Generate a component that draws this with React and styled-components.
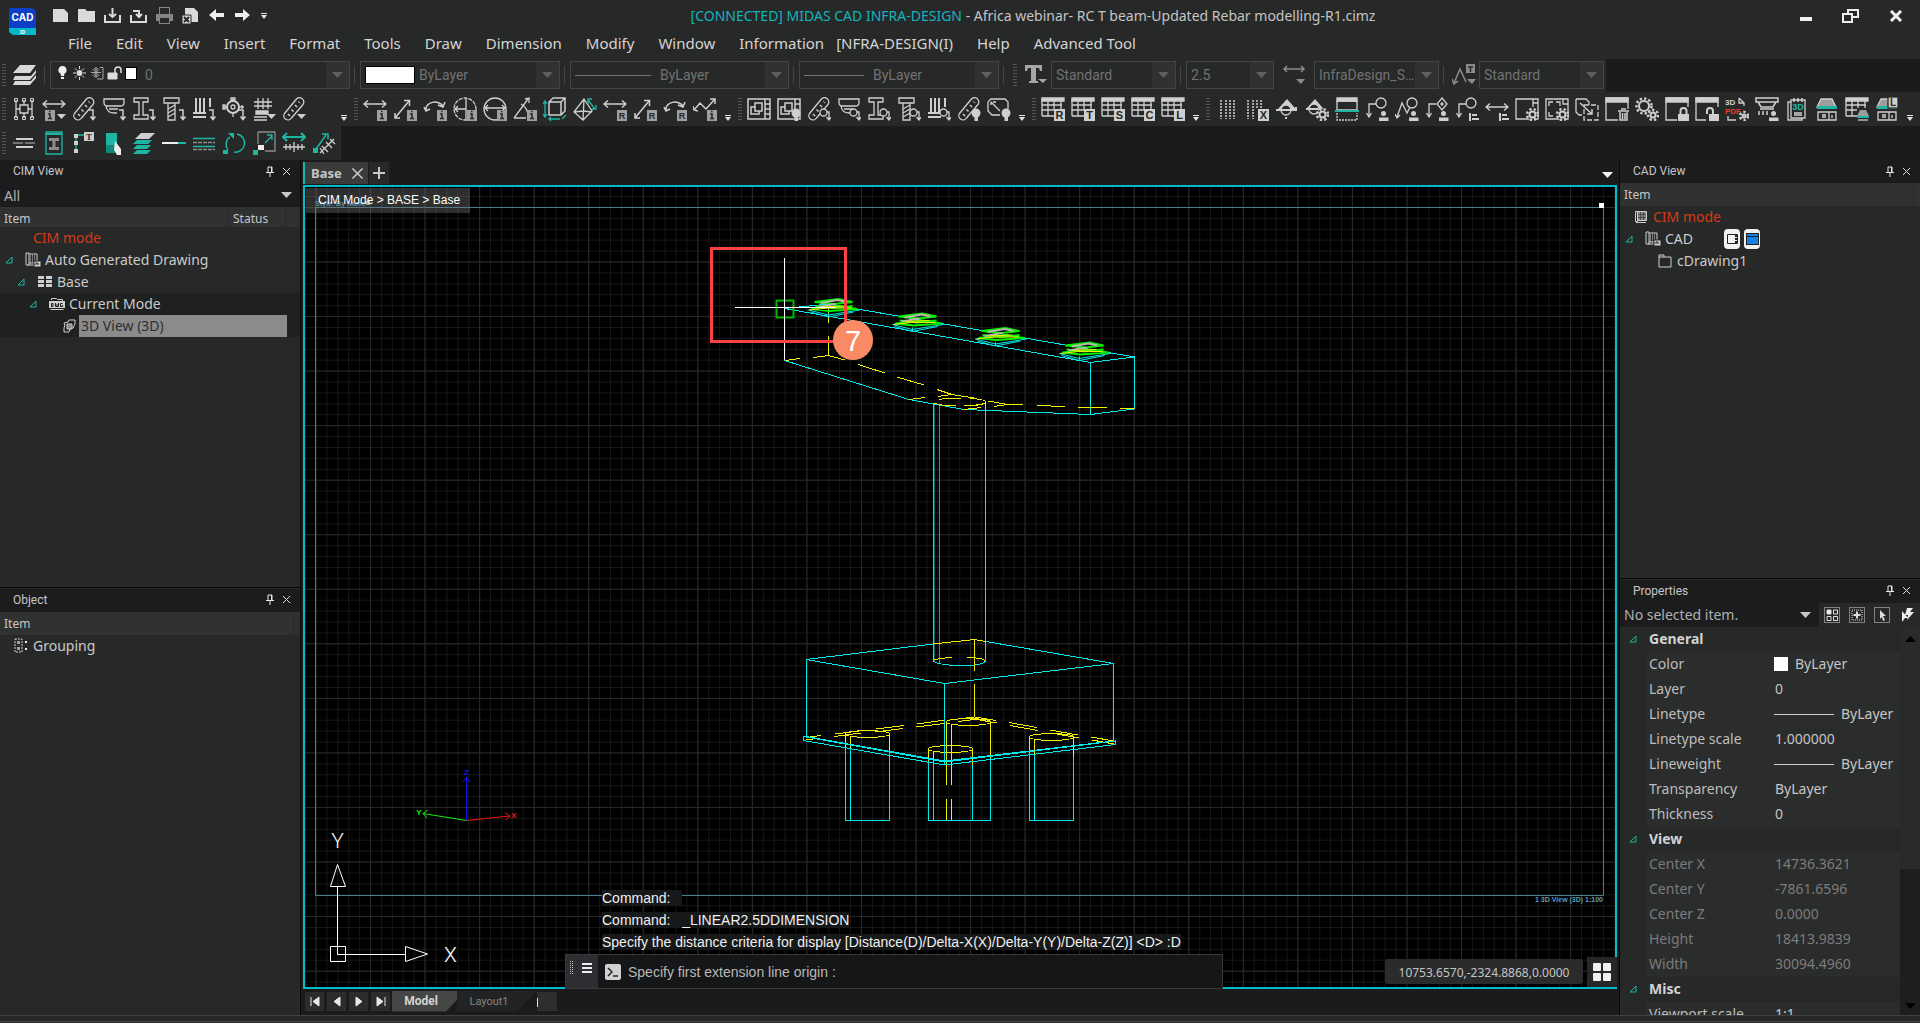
import { useState } from "react";
import styled, { createGlobalStyle } from "styled-components";

const GlobalStyle = createGlobalStyle`
  * {
    box-sizing: border-box;
  }

  body {
    margin: 0;
    background: #1b1b1b;
    color: #c6c6c6;
    font-family: "Noto Sans", "Open Sans", sans-serif;
    font-size: 14px;
    overflow: hidden;
  }

  button, select, input {
    font: inherit;
    color: inherit;
    background: none;
    border: 0;
    padding: 0;
    margin: 0;
    outline: none;
  }

  svg {
    display: block;
    flex: none;
  }
`;

const Page = styled.div`
  display: flex;
  flex-direction: column;
  height: 100vh;
`;

const Header = styled.header`
  display: flex;
  height: 59px;
  background: #272828;
`;

const LogoSlot = styled.div`
  width: 47px;
  padding: 8px 0 0 9px;
`;

const HeaderRows = styled.div`
  flex: 1;
  min-width: 0;
`;

const TitleRow = styled.div`
  display: flex;
  align-items: center;
  height: 31px;
`;

const QuickButton = styled.button`
  display: flex;
  align-items: center;
  justify-content: center;
  width: ${props => props.$narrow ? 18 : 26}px;
  height: 30px;
`;

const Title = styled.h1`
  flex: 1;
  margin: 0 0 0 10px;
  text-align: center;
  font-size: 14px;
  font-weight: 400;
  line-height: 30px;
  color: #c4c4c4;
  white-space: nowrap;
`;

const Product = styled.span`
  color: #14b4be;
`;

const WindowButtons = styled.div`
  display: flex;
  padding-right: 2px;
`;

const WindowButton = styled.button`
  display: flex;
  align-items: center;
  justify-content: center;
  width: 45px;
  height: 28px;
`;

const MenuBar = styled.nav`
  display: flex;
  gap: 24px;
  padding-left: 21px;
  height: 24px;
`;

const MenuItem = styled.button`
  margin-left: ${props => props.$tight ? -12 : 0}px;
  font-size: 15px;
  line-height: 24px;
  white-space: nowrap;
  color: #d4d4d4;
`;

const Toolbar = styled.div`
  display: flex;
  align-items: center;
  align-self: flex-start;
  height: ${props => props.$height || 34}px;
  width: ${props => props.$fill ? "100%" : "auto"};
  padding: 0 ${props => props.$fill ? 0 : 2}px 1px 0;
  background: #272828;
`;

const Gripper = styled.div`
  width: 4px;
  height: 24px;
  margin: 0 ${props => props.$after || 2}px 0 ${props => props.$before || 2}px;
  background-image: radial-gradient(circle, #565656 1px, transparent 1px);
  background-size: 2px 3px;
`;

const Separator = styled.div`
  width: 1px;
  height: 18px;
  margin: 0 5px 0 4px;
  background: #454545;
`;

const ToolButton = styled.button`
  display: flex;
  align-items: center;
  justify-content: center;
  width: 30px;
  height: 30px;
`;

const Overflow = styled.button`
  display: flex;
  align-items: flex-end;
  justify-content: flex-end;
  width: ${props => props.$wide ? 43 : 16}px;
  height: 24px;
  padding: 0 5px 0 0;
`;

const WideIcon = styled.div`
  display: flex;
  justify-content: center;
  width: ${props => props.$width}px;
`;

const ComboFrame = styled.div`
  display: flex;
  align-items: center;
  width: ${props => props.$width}px;
  height: 28px;
  border: 1px solid #434444;
  color: #727272;
  font-family: Roboto, sans-serif;
  font-size: 14px;
`;

const ComboSelect = styled.select`
  appearance: none;
  flex: 1;
  min-width: 0;
  height: 26px;
  padding-left: 4px;
  text-overflow: ellipsis;
`;

const ComboArrow = styled.span`
  display: flex;
  align-items: center;
  justify-content: center;
  width: 23px;
  height: 26px;
  background: #303133;
`;

const LayerState = styled.span`
  display: flex;
  align-items: center;
  gap: 3px;
  padding: 0 4px 4px 5px;
`;

const ColorBlock = styled.span`
  width: ${props => props.$width}px;
  height: ${props => props.$height}px;
  border: 1px solid #000;
  background: #fff;
`;

const BlockSlot = styled.span`
  display: flex;
  padding-left: 4px;
`;

const LineSample = styled.span`
  width: ${props => props.$width}px;
  height: 1px;
  margin: 0 5px 0 4px;
  background: #757575;
`;

const Body = styled.main`
  display: flex;
  flex: 1;
  min-height: 0;
  background: #1b1b1c;
`;

const Side = styled.aside`
  display: flex;
  flex-direction: column;
  width: 301px;
  border: solid #080808;
  border-width: ${props => props.$right ? "0 0 0 1px" : "0 1px 0 0"};
`;

const Panel = styled.section`
  display: flex;
  flex-direction: column;
  flex: ${props => props.$grow || 1} 1 0;
  min-height: 0;
  background: #272828;

  & + & {
    padding-top: 1px;
    border-top: 1px solid #080808;
  }
`;

const PanelHeader = styled.div`
  display: flex;
  align-items: center;
  flex: none;
  height: 23px;
  padding: 0 6px 1px 13px;
  background: #1c1c1d;
`;

const PanelTitle = styled.h2`
  flex: 1;
  margin: 0;
  font-family: Roboto, sans-serif;
  font-size: 12px;
  font-weight: 400;
  line-height: 20px;
`;

const PanelButton = styled.button`
  display: flex;
  align-items: center;
  justify-content: center;
  width: 16px;
  height: 20px;
`;

const Filter = styled.div`
  display: flex;
  align-items: center;
  flex: 1;
  height: 24px;
  padding: 0 8px 0 4px;
  background: #1c1c1e;
`;

const FilterRow = styled.div`
  display: flex;
  align-items: center;
  flex: none;
  height: 24px;
`;

const FilterSelect = styled.select`
  appearance: none;
  flex: 1;
  height: 24px;
  font-size: 14px;
  color: #b0b0b0;
`;

const ColumnHeads = styled.div`
  display: flex;
  flex: none;
  height: ${props => props.$tall ? 23 : 20}px;
  background: #303131;
  font-size: 12px;
  line-height: 23px;
`;

const ColumnHead = styled.div`
  width: ${props => props.$width ? `${props.$width}px` : "auto"};
  flex: ${props => props.$width ? "none" : 1};
  padding-left: 4px;
  border-right: 1px solid #272828;
`;

const ColumnTail = styled.div`
  width: ${props => props.$width}px;
`;

const Tree = styled.ul`
  margin: 0;
  padding: 0;
  list-style: none;
`;

const TreeRow = styled.li`
  display: flex;
  align-items: center;
  height: 22px;
  padding-left: ${props => props.$level * 12 + 3}px;
  padding-right: 13px;
  color: ${props => props.$alert ? "#d63a17" : "#cacaca"};
  background: ${props => props.$dark ? "#1f2020" : "transparent"};
`;

const Twist = styled.span`
  display: flex;
  justify-content: center;
  width: ${props => props.$slim ? 10 : 12}px;
`;

const TreeIcon = styled.span`
  display: flex;
  align-items: center;
  justify-content: center;
  width: 16px;
  margin-left: ${props => props.$slim ? 0 : 10}px;
`;

const TreeLabel = styled.span`
  flex: ${props => props.$selected ? 1 : "none"};
  margin-left: 2px;
  padding-left: 2px;
  line-height: 22px;
  color: ${props => props.$selected ? "#2e2e2e" : "inherit"};
  background: ${props => props.$selected ? "#8b8b8b" : "none"};
`;

const Chips = styled.span`
  display: flex;
  gap: 4px;
  margin-left: 31px;
`;

const Chip = styled.button`
  display: flex;
  align-items: center;
  justify-content: center;
  width: 16px;
  height: 20px;
  border-radius: 4px;
  background: #f2f2f2;
`;

const Center = styled.section`
  display: flex;
  flex-direction: column;
  flex: 1;
  min-width: 0;
  padding: 0 2px;
`;

const DocTabs = styled.div`
  display: flex;
  align-items: flex-end;
  height: 25px;
  padding-bottom: 1px;
`;

const DocTab = styled.button`
  display: flex;
  align-items: center;
  gap: 9px;
  width: 65px;
  height: 22px;
  padding-left: 6px;
  border-left: 2px solid #10b8b0;
  background: #3a3b3b;
  font-size: 13px;
  font-weight: 700;
`;

const AddTab = styled.button`
  display: flex;
  align-items: center;
  justify-content: center;
  width: 20px;
  height: 22px;
  margin-left: 1px;
  background: #29292a;
`;

const TabListButton = styled.button`
  margin: 0 4px 6px auto;
`;

const Viewport = styled.div`
  position: relative;
  flex: 1;
  min-height: 0;
  border: 2px solid #00bccb;
  background: #000;
`;

const Scene = styled.svg`
  width: 100%;
  height: 100%;
`;

const Crumb = styled.div`
  position: absolute;
  top: 1px;
  left: 1px;
  width: 164px;
  padding-left: 12px;
  font-family: "Liberation Sans", sans-serif;
  font-size: 12px;
  line-height: 25px;
  white-space: nowrap;
  color: #fff;
  background: rgba(110, 110, 110, 0.42);
`;

const Console = styled.div`
  position: absolute;
  left: 260px;
  bottom: -2px;
  width: 658px;
  font-family: "Liberation Sans", sans-serif;
  font-size: 14px;
`;

const LogLine = styled.div`
  height: 22px;
  padding: 2px 0 0 37px;
  white-space: pre;
  color: #f0f0f0;

  span {
    background: #16181a;
  }
`;

const CommandBar = styled.div`
  display: flex;
  height: 35px;
  border: 1px solid #37383a;
  background: #151617;
`;

const CommandHandle = styled.button`
  display: flex;
  align-items: center;
  gap: 9px;
  width: 32px;
  padding: 0 4px 7px;
  background: #2d2e31;
`;

const CommandInput = styled.input`
  flex: 1;
  padding: 0 7px;
  color: #b9b9b9;
`;

const CommandIcon = styled.span`
  display: flex;
  align-items: center;
  padding-left: 7px;
`;

const Readout = styled.output`
  position: absolute;
  right: 32px;
  bottom: 3px;
  width: 198px;
  height: 25px;
  border-radius: 3px;
  text-align: center;
  font-size: 12px;
  line-height: 27px;
  color: #c4c4c4;
  background: #2a2b2c;
`;

const TileButton = styled.button`
  position: absolute;
  right: -2px;
  bottom: 0;
  display: flex;
  align-items: center;
  justify-content: center;
  width: 30px;
  height: 30px;
  background: #262728;
`;

const LayoutTabs = styled.div`
  display: flex;
  align-items: center;
  height: 26px;
  padding: 0 0 2px 2px;
  font-family: Roboto, sans-serif;
`;

const NavButton = styled.button`
  display: flex;
  align-items: center;
  justify-content: center;
  width: 19px;
  height: 19px;
  margin-right: 3px;
  background: #2b2c2e;
`;

const LayoutTab = styled.button`
  width: ${props => props.$active ? 74 : 80}px;
  height: 21px;
  margin-left: ${props => props.$active ? -1 : -9}px;
  padding: 0 ${props => props.$active ? 16 : 20}px 0 ${props => props.$active ? 0 : 4}px;
  font-size: ${props => props.$active ? 12 : 11}px;
  font-weight: ${props => props.$active ? 700 : 400};
  color: ${props => props.$active ? "#d4d4d4" : "#858585"};
  background: ${props => props.$active ? "#454646" : "#222324"};
  clip-path: polygon(0 0, 100% 0, calc(100% - 20px) 100%, 0 100%);
`;

const TabSplitter = styled.div`
  width: 20px;
  height: 19px;
  background: linear-gradient(#ddd, #ddd) 0 6px / 1px 9px no-repeat #2e2e31;
`;

const StatusStrip = styled.footer`
  height: 8px;
  border-top: 1px solid #3f4040;
  background: linear-gradient(#4a4b4b, #4a4b4b) 0 5px / 100% 1px no-repeat #262727;
`;

const PickButton = styled.button`
  display: flex;
  align-items: center;
  justify-content: center;
  width: 25px;
  height: 24px;
`;

const PickButtons = styled.div`
  display: flex;
  width: 101px;
`;

const PropertyArea = styled.div`
  display: flex;
  flex: 1;
  min-height: 0;
  overflow: hidden;
`;

const PropertyScroll = styled.div`
  flex: 1;
  min-width: 0;
  overflow: hidden;
`;

const PropertyTable = styled.table`
  width: 100%;
  table-layout: fixed;
  border-collapse: collapse;
  font-size: 14px;

  td, th {
    height: 25px;
    padding: 0;
    text-align: left;
    font-weight: 400;
    line-height: 24px;
    white-space: nowrap;
  }
`;

const TwistCell = styled.td`
  && {
    padding-left: 7px;
  }
`;

const SectionName = styled.th`
  && {
    padding-left: 3px;
    font-weight: 700;
    color: #d2d2d2;
  }
`;

const NameCell = styled.th`
  && {
    padding-left: 3px;
    color: ${props => props.$dim ? "#7c7c7c" : "#bebebe"};
    background: #2b2c2c;
  }
`;

const ValueCell = styled.td`
  color: ${props => props.$dim ? "#7c7c7c" : "#c6c6c6"};
  background: #2b2c2c;
`;

const ValueLine = styled.span`
  display: flex;
  align-items: center;
  gap: 7px;
  padding-left: ${props => props.$sample ? 2 : 3}px;
`;

const Swatch = styled.span`
  width: ${props => props.$line ? 60 : 14}px;
  height: ${props => props.$line ? 1 : 14}px;
  background: ${props => props.$line ? "#d0d0d0" : "#fff"};
`;

const Scrollbar = styled.div`
  display: flex;
  flex-direction: column;
  align-items: center;
  justify-content: space-between;
  width: 20px;
  padding: 9px 0 6px;
  background: linear-gradient(#292a2a, #292a2a) 0 0 / 100% 242px no-repeat #1d1e1e;
`;

/* ---------- icons ---------- */

const G = "#cfcfcf";
const TEAL = "#1fb5a4";
const BG = "#272828";

const Tag = ({ children, x = 13 }) => (
  <g>
    <rect x={x} y="12" width="11" height="12" fill={G} stroke="none" />
    <text x={x + 5.5} y="22" fontSize="11" fontWeight="700" fontFamily="Liberation Sans" textAnchor="middle" fill={BG} stroke="none">{children}</text>
  </g>
);

// small R tag drawn with a grey ground, used on dimension tools
const RTag = () => (
  <g>
    <rect x="14" y="13" width="10" height="11" fill="#9f9f9f" stroke="none" />
    <text x="19" y="22" fontSize="9" fontWeight="700" fontFamily="Liberation Sans" textAnchor="middle" fill={BG} stroke="none">R</text>
  </g>
);

const InfoTag = ({ x = 14 }) => (
  <g>
    <rect x={x} y="13" width="10" height="11" fill="#9f9f9f" stroke="none" />
    <path d={`M${x + 3} 17h2v4.500M${x + 3} 21.500h4M${x + 4} 14.500h1.500`} stroke={BG} strokeWidth="1.500" />
  </g>
);

const Turn = () => <path d="M17 13h4v9M18.500 19.500l2.500 3 2.500-3" strokeWidth="1.500" />;
const Drop = () => <path d="M15 17h9l-4.500 5z" fill={G} stroke="none" />;
const Orbit = () => (
  <g>
    <circle cx="16.500" cy="15.500" r="3.500" fill={BG} />
    <path d="M20 15h2v7M19.500 20l2.500 3 2-3" />
  </g>
);
const Bulb = () => (
  <g fill={G} stroke="none">
    <circle cx="19" cy="16" r="4.500" />
    <path d="M17.500 20h3.500v4h-3.500z" />
  </g>
);
const Gear = ({ x = 17.5, y = 17.5, r = 4 }) => (
  <g>
    <circle cx={x} cy={y} r={r + 1.5} fill={BG} stroke={G} strokeWidth="2.500" strokeDasharray="2.300 2.100" />
    <circle cx={x} cy={y} r={r - 1} fill={BG} stroke={G} strokeWidth="2" />
  </g>
);
const Person = () => (
  <g fill={G} stroke="none">
    <circle cx="18.500" cy="16.500" r="2.500" />
    <path d="M14 20.500h9.500v3.500h-9.500z" />
  </g>
);
const List = () => <path d="M15 16v8M17 18h5M17 22h7" strokeWidth="2" />;
const Frame = () => (
  <g>
    <path d="M1 1h22v22H1z" />
    <path d="M1 1h22v4H1z" fill={G} />
  </g>
);

const Capsule = () => (
  <g>
    <path d="M2.500 16.500L14 2.500a4 4 0 0 1 7 5L9.500 21a4 4 0 0 1-7-4.500z" />
    <path d="M6.500 18.500l1-1M10 14l1-1M13.500 9.500l1-1M17 5.500l.500-.500" strokeWidth="3" />
  </g>
);
const Slab = () => <path d="M2 2h20v4q0 3-4 3H6Q2 9 2 6zM4 9q1 7 8 7h3M7 12h9" />;
const IBeam = () => <path d="M2 1h14v4h-5v13h5v4H2v-4h5V5H2z" />;
const Bolt = () => (
  <g>
    <path d="M2 1h15v5H2zM6 6h7v17H6z" />
    <path d="M6 12l7-4M6 16l7-4M6 20l7-4" />
  </g>
);
const Piles = () => <path d="M4 1v15M8 1v15M12 1v15M18 1v9M1 16h13M1 20h13" strokeWidth="2" />;
const HArrow = () => <path d="M1 7h22M5 3.500L1 7l4 3.500M19 3.500L23 7l-4 3.500" strokeWidth="1.500" />;
const DArrow = () => <path d="M2 21L16 4M2 16v5h5M11 3.500h5.500V9" strokeWidth="1.500" />;
const Arc = () => <path d="M3 13a9 7 0 0 1 17-4M1 10l2 4 4-2M15 8l5 2 2-5" strokeWidth="1.500" />;
const Sheet = () => <path d="M1 3h20M1 8h20M1 13h20M1 19h12M1 2v17M7 2v17M13 2v10M20 2v10" />;
const Lamp = () => (
  <g>
    <path d="M6 2h11l4 8H2z" fill="#9d9d9d" />
    <path d="M2 9h20v3H2z" fill={TEAL} stroke="none" />
    <path d="M3 15h18v8H3zM7 18h4M7 20h4M14 15v8M17 18v3" />
  </g>
);

const icons = {
  frames: <g><path d="M4 3v18M20 3v18M12 3v18M4 12h16" /><path d="M8 8h8v8H8z" fill={BG} /><path d="M2.500 1.500h3v3h-3zM2.500 19.500h3v3h-3zM18.500 1.500h3v3h-3zM18.500 19.500h3v3h-3zM10.500 1.500h3v3h-3zM10.500 19.500h3v3h-3z" strokeWidth="1" /></g>,
  dimInfo: <g><HArrow /><InfoTag x={3} /><Drop /></g>,
  rebar: <g><Capsule /><Turn /></g>,
  slab: <g><Slab /><Turn /></g>,
  beam: <g><IBeam /><Turn /></g>,
  bolt: <g><Bolt /><Turn /></g>,
  piles: <g><Piles /><Turn /></g>,
  target: <g><path d="M11 1v19M1 10h21" /><circle cx="11" cy="10" r="6" fill={BG} strokeWidth="2" /><circle cx="11" cy="10" r="2" /><path d="M9 1h4v2H9zM1 8v4h2V8zM20 8v4" /><Turn /></g>,
  mesh: <g><path d="M6 1v11M11 1v11M16 1v11M2 5h18M2 9h18" /><path d="M4 14h12v3H4z" fill={G} /><path d="M2 20h13M2 23h13" /><Drop /></g>,
  rebarDrop: <g><Capsule /><Drop /></g>,
  dimH: <g><HArrow /><InfoTag /></g>,
  dimD: <g><DArrow /><InfoTag /></g>,
  dimArc: <g><Arc /><InfoTag /></g>,
  radius: <g><circle cx="12" cy="12" r="11" strokeDasharray="4 1" /><path d="M2 12h11M5 9l-3 3 3 3M13 2v20" /><InfoTag /></g>,
  diameter: <g><circle cx="12" cy="12" r="11" /><path d="M2 11h20M5 8l-3 3 3 3M19 8l3 3-3 3" /><InfoTag /></g>,
  angle: <g><path d="M1 21L15 2M1 21h12M8 7a14 14 0 0 1 7 12M12 2l4-1v5" /><InfoTag /></g>,
  boxDim: <g><path d="M6 5l4-4h12v13l-4 4H6zM6 5h12v13M18 5l4-4" strokeWidth="1.500" /><path d="M2 5v14M0 7l2-3 2 3M0 17l2 3 2-3M6 22h11M8 20l-2 2 2 2M19 22l4-4" stroke={TEAL} /></g>,
  pyramid: <g><path d="M11 2L1 15l9 8 9-9zM11 2l-1 21M1 15l9-1 9 1" /><path d="M15 3l7 9M15 7V2h4M19 12h4V8" stroke={TEAL} /></g>,
  dimHR: <g><HArrow /><RTag /></g>,
  dimDR: <g><DArrow /><RTag /></g>,
  dimArcR: <g><Arc /><RTag /></g>,
  zigzag: <g><path d="M1 13l6-7 6 6L22 2M17 2h5v5M0 9l1 4 4 1" strokeWidth="1.500" /><InfoTag /></g>,
  viewport: <g><path d="M1 2h22v20H1zM18 2v20M18 7h5M18 12h5M18 17h5" strokeWidth="1.500" /><path d="M8 6h7v8H8zM8 10H4v7h8v-3" strokeWidth="1.500" /></g>,
  viewportBulb: <g><path d="M1 2h22v20H1zM18 2v12M18 7h5" strokeWidth="1.500" /><path d="M8 6h7v8H8zM8 10H4v7h8v-3" strokeWidth="1.500" /><Bulb /></g>,
  rebarO: <g><Capsule /><Orbit /></g>,
  slabO: <g><Slab /><Orbit /></g>,
  beamO: <g><IBeam /><Orbit /></g>,
  boltO: <g><Bolt /><Orbit /></g>,
  pilesO: <g><Piles /><Orbit /></g>,
  rebarBulb: <g><Capsule /><Bulb /></g>,
  tagBulb: <g><path d="M1 5l3-3h14l3 3v7M1 5v9l4 4h8M4 5l9 9M6 5h3M4 8V5" /><Bulb /></g>,
  tableR: <g><path d="M1 1h22v3H1z" fill={G} /><Sheet /><Tag>R</Tag></g>,
  tableT: <g><path d="M1 1h22v3H1z" fill={G} /><Sheet /><Tag>T</Tag></g>,
  tableS: <g><path d="M1 1h22v3H1z" fill={G} /><Sheet /><Tag>S</Tag></g>,
  tableC: <g><path d="M1 1h22v3H1z" fill={G} /><Sheet /><Tag>C</Tag></g>,
  tableL: <g><path d="M1 1h22v3H1z" fill={G} /><Sheet /><Tag>L</Tag></g>,
  columns: <path d="M6 3v19M11 3v19M15 3v19M19 3v19" strokeDasharray="2 1" strokeWidth="1.500" />,
  columnsX: <g><path d="M3 3v19M8 3v19M12 3v9M16 3v9" strokeDasharray="2 1" strokeWidth="1.500" /><Tag>X</Tag></g>,
  section: <g><path d="M4 12l8-9 8 9z" fill={G} /><circle cx="11" cy="13" r="5" fill={BG} /><path d="M1 13h20v-3M11 20v2" strokeWidth="2" /></g>,
  sectionGear: <g><path d="M3 11l7-8 7 8z" fill={G} /><circle cx="9" cy="12" r="5" fill={BG} /><path d="M1 12h12" strokeWidth="2" /><Gear /></g>,
  splitView: <g><path d="M2 4h20v9H2z" /><path d="M2 1h20v3H2z" fill={G} /><path d="M0 14h24" stroke={TEAL} strokeWidth="2" /><path d="M2 16v7h20v-7" strokeDasharray="2 1" /></g>,
  leader: <g><path d="M11 7H4v12M1.500 16L4 20l2.500-4" /><circle cx="16" cy="6" r="5" /><Person /></g>,
  leaderZig: <g><path d="M2 20L7 6l5 10 3-6M0 17l2 4 3-3" /><circle cx="17" cy="6" r="5" /><Person /></g>,
  leaderDot: <g><path d="M11 7H4v12M1.500 16L4 20l2.500-4" /><path d="M17 1l5 6-5 6-5-6z" /><circle cx="17" cy="7" r="1" /><Person /></g>,
  leaderList: <g><path d="M11 7H4v12M1.500 16L4 20l2.500-4" /><circle cx="16" cy="6" r="5" /><List /></g>,
  dimList: <g><path d="M1 10h22M5 6.500L1 10l4 3.500M19 6.500L23 10l-4 3.500" strokeWidth="1.500" /><List /></g>,
  panelGear: <g><path d="M1 2h22v20H1zM18 2v8M18 6h5" /><Gear /></g>,
  fitGear: <g><path d="M1 2h22v20H1z" /><path d="M4 9V5h4M11 5h4v4M4 15v4h4M18 2v5h5" /><Gear /></g>,
  copyView: <g><path d="M1 2h10l3 3v3M1 2v13l3 3h3" /><path d="M9 8h14v15H9z" strokeDasharray="5 2" /><path d="M5 6l12 11M17 12v5h-5" strokeWidth="1.500" /></g>,
  panelTrash: <g><Frame /><path d="M13 12h11v12H13z" fill={BG} stroke="none" /><path d="M13 14h11M16 12h5M15 15v8h7v-8M17.500 16v6M20 16v6" strokeWidth="1.500" /></g>,
  gears: <g><Gear x={9} y={9} r={6} /><Gear x={18} y={18} r={3.5} /></g>,
  panelLock: <g><Frame /><path d="M12 10h12v14H12z" fill={BG} stroke="none" /><path d="M13 17h11v7H13z" fill={G} stroke="none" /><path d="M15.500 17v-3a3 3 0 0 1 6 0v3" strokeWidth="2" /></g>,
  panelUnlock: <g><Frame /><path d="M11 10h13v14H11z" fill={BG} stroke="none" /><path d="M14 17h10v7H14z" fill={G} stroke="none" /><path d="M12 17v-3a3 3 0 0 1 6 0v3" strokeWidth="2" /></g>,
  pdf: (
    <g>
      <text x="0" y="8" fontSize="8" fontWeight="700" fontFamily="Liberation Sans" fill={G} stroke="none">3D</text>
      <text x="0" y="17" fontSize="8" fontWeight="700" fontFamily="Liberation Sans" fill="#f03a28" stroke="none">PDF</text>
      <path d="M14 1l5 5v3M14 1v5h5M3 19v4h8" />
      <Gear x={19} y={19} r={2.5} />
    </g>
  ),
  deck: <g><path d="M1 1h22v4H1zM3 5l3 5h12l3-5M4 14v4M8 14v4M12 14v4M5 12h14" strokeWidth="1.500" /><Person /></g>,
  note: (
    <g>
      <path d="M6 3h14v18H6zM6 5H3v18h14v-2" />
      <path d="M9 1v4M13 1v4M17 1v4" strokeWidth="1.500" />
      <text x="13" y="13" fontSize="9" fontWeight="700" fontFamily="Liberation Sans" textAnchor="middle" fill={TEAL} stroke="none">3D</text>
      <path d="M9 16h8M9 18h8" />
    </g>
  ),
  lamp: <Lamp />,
  tableLamp: <g><path d="M1 1h22v3H1z" fill={G} /><Sheet /><path d="M12 11h12v13H12z" fill={BG} stroke="none" /><path d="M15 13h6l3 6H12z" fill="#9d9d9d" stroke="none" /><path d="M12 19h12v2H12z" fill={TEAL} stroke="none" /><path d="M13 23h10" /></g>,
  lampL: (
    <g>
      <Lamp />
      <rect x="13" y="0" width="10" height="11" fill={G} stroke={BG} />
      <text x="18" y="9" fontSize="10" fontWeight="700" fontFamily="Liberation Sans" textAnchor="middle" fill={BG} stroke="none">L</text>
    </g>
  ),

  // third toolbar
  threeLines: <g><path d="M4 8h17M4 16h17" strokeWidth="2" /><path d="M1 12h10M13 12h10" stroke="#8c8c8c" /></g>,
  beamTeal: <g><path d="M4 1h16v22H4z" stroke={TEAL} /><path d="M4 3h16" stroke={TEAL} strokeWidth="2" /><path d="M7 7h10v3h-3.500v6H17v3H7v-3h3.500v-6H7z" fill="#8c8c8c" stroke="none" /></g>,
  leaderText: (
    <g>
      <path d="M4 20V4h8" stroke={TEAL} />
      <path d="M2 3h4v4H2zM2 10h4v4H2zM2 18h4v4H2z" fill={G} stroke="none" />
      <rect x="12" y="1" width="10" height="9" fill={G} stroke="none" />
      <text x="17" y="9" fontSize="9" fontWeight="700" fontFamily="Liberation Serif" textAnchor="middle" fill={BG} stroke="none">T</text>
    </g>
  ),
  pick: <g stroke="none"><path d="M4 2h11v12H4z" fill={TEAL} /><path d="M4 14h9v8H4z" fill="#12877a" /><path d="M13 10l6 8v6h-4l-3-5z" fill="#eee" /></g>,
  layersTeal: <g stroke="none"><path d="M9 2h14l-6 6H3z" fill={G} /><path d="M5 9h15l-4 4H1zM5 14h14l-4 4H1zM5 19h14l-4 4H1z" fill={TEAL} /></g>,
  lineTeal: <g strokeWidth="2"><path d="M0 12h16" stroke="#eee" /><path d="M16 12h8" stroke={TEAL} /></g>,
  lineSet: <g><path d="M1 7.500h22M1 15.500h22" stroke={TEAL} /><path d="M1 11.500h22M1 18.500h22" strokeDasharray="4 1" stroke="#8c8c8c" /></g>,
  rotate: <g><path d="M8 6a9 9 0 0 0-2 13M15 3a9 9 0 0 1-3 18" stroke={TEAL} strokeWidth="1.500" /><path d="M6 2h6v6zM1 19h5v4H1z" fill={TEAL} stroke="none" /></g>,
  scale: <g><path d="M6 1h17v19H13M6 1v12" stroke="#8c8c8c" /><path d="M6 14h6v5H6z" fill="#eee" stroke="none" /><path d="M1 19h5v5H1z" fill={TEAL} stroke="none" /><path d="M13 12l7-7M15 4h5v5" stroke={TEAL} /></g>,
  stretchH: <g><path d="M1 6h22M5 2L1 6l4 4M19 2l4 4-4 4" stroke={TEAL} strokeWidth="2" /><path d="M1 16h22M4 13v6M8 13v6M12 11v10M16 13v6M20 13v6" /></g>,
  stretchD: <g><path d="M4 18L14 4M10 3h6v5" stroke={TEAL} strokeWidth="1.500" /><path d="M1 17h5v5H1z" fill={TEAL} stroke="none" /><path d="M8 22L22 8M10 15l6 6M14 11l6 6M18 8l5 5M8 17l4 6" /></g>,
};

function Icon({ name, size = 24 }) {
  return (
    <svg width={size} height={size} viewBox="0 0 24 24" fill="none" stroke={G} strokeWidth="1.300" aria-hidden="true">
      {icons[name]}
    </svg>
  );
}

function OverflowMark() {
  return (
    <svg width="6" height="6" viewBox="0 0 6 6" fill="#e4e4e4">
      <path d="M0 0h6v1H0zM0 2h6L3 6z" />
    </svg>
  );
}

function Triangle({ color = "#5f5f60", size = 11 }) {
  return (
    <svg width={size} height="6" viewBox="0 0 12 6" preserveAspectRatio="none" fill={color}>
      <path d="M0 0h12L6 6z" />
    </svg>
  );
}

function Logo() {
  return (
    <svg width="28" height="28" viewBox="0 0 28 28">
      <path d="M1 0h22l4 3v18H0V1z" fill="#0c3fc4" />
      <path d="M0 20h27v7H4l-4-3z" fill="#06b8cc" />
      <text x="13.500" y="13" fontSize="10" fontWeight="700" fontFamily="Inter" textAnchor="middle" fill="#fff">CAD</text>
      <text x="13.500" y="26" fontSize="5" fontWeight="700" fontFamily="Inter" textAnchor="middle" fill="#fff">ID</text>
    </svg>
  );
}

const quickIcons = [
  ["New", <path d="M1 2h11l4 4v9H1z" fill="#dadada" />],
  ["Open", <path d="M0 2h7l2 2h8v11H0z" fill="#dadada" />],
  ["Save", <path d="M1 8v7h15V8M8.500 1v8M5 7l3.500 3L12 7" fill="none" stroke="#dadada" strokeWidth="2" />],
  ["Save as", <path d="M1 8v7h15V8M3 4h6v5M6 7l3 3 3-3" fill="none" stroke="#dadada" strokeWidth="2" />],
  ["Print", <path d="M3 0h11v7h3v7h-3v3H3v-3H0V7h3zM4 1v6h9V1zM4 11v5h9v-5z" fill="#858585" fillRule="evenodd" />],
  ["Export", <g><path d="M3 1h9l4 4v10H3z" fill="#dadada" /><path d="M0 8h9v9H0z" fill="#dadada" stroke="#272828" /><path d="M2 10l5 5M7 10l-5 5" stroke="#272828" strokeWidth="2" /></g>],
  ["Undo", <path d="M1 8l7-6v4h8v4H8v4z" fill="#eee" />],
  ["Redo", <path d="M16 8L9 2v4H1v4h8v4z" fill="#eee" />],
];

function PinIcon() {
  return (
    <svg width="8" height="11" viewBox="0 0 8 11" fill="none" stroke="#eaeaea">
      <path d="M2 6V1h4v5M5.500 1v5M0 6.500h8M4 7v4" />
    </svg>
  );
}

function CrossIcon({ size = 9, color = "#dcdcdc" }) {
  return (
    <svg width={size} height={size} viewBox="0 0 9 9" fill="none" stroke={color}>
      <path d="M1 1l7 7M8 1L1 8" />
    </svg>
  );
}

function TwistIcon() {
  return (
    <svg width="8" height="8" viewBox="0 0 8 8" fill="none" stroke={TEAL}>
      <path d="M1 7L7 1v6z" />
    </svg>
  );
}

const treeIcons = {
  drawing: <g><path d="M1 1h3v12H1zM4 2h8v9H4M3 13h6" /><path d="M5 4h6M5 6h6M5 8h6M5 10h6" strokeWidth="1" strokeDasharray="1 1" /><path d="M9 9h7v6H9z" fill={G} stroke="#272828" /><path d="M11 13v-2h2v2" stroke="#272828" /></g>,
  sheet: <g><path d="M2.500 2.500h2v10h-2z" /><path d="M4.500 2.500h9v9h-9z" fill="#8a8a8a" /><path d="M5 5.500h8M5 8.500h8M7.500 3v8M10.500 3v8" stroke="#4a4a4a" /><path d="M3 13.500h10" /></g>,
  base: <path d="M1 2h6v3H1zM9 2h6v3H9zM1 6h6v3H1zM9 6h6v3H9zM1 10h6v3H1zM9 10h6v3H9z" fill={G} stroke="none" />,
  dwg: (
    <g>
      <path d="M2.500 4V2.500h5l1 1h5V5M1.500 13.500h13" />
      <path d="M0 5h16v7H0z" fill={G} stroke="none" />
      <path d="M2.500 10.500v-3h1.500v3zM6.500 7v3.500H8M8 8v2.500h1.500V7M13.500 7.500h-2v3h2V9" stroke="#1f2020" />
    </g>
  ),
  view3d: <g><path d="M3 5l4-1 1-2h6v4l-2 4-3 1-1 3H3v-4l1-3z" /><path d="M6 6h5v5H6z" fill="#8a8a8a" /></g>,
  folder: <path d="M2 4h12v10H2zM2 4V2h5v2" />,
  group: <g><path d="M2 1h7v13H2z" strokeDasharray="2 1" /><path d="M4 3h3v3H4zM4 9h3v3H4z" fill="#a0a0a0" stroke="none" /><path d="M12 3h2v2h-2zM12 10h2v2h-2z" fill="#eee" stroke="none" /></g>,
};

/* ---------- reusable pieces ---------- */

function Combo({ label, value, width, children }) {
  return (
    <ComboFrame $width={width}>
      {children}
      <ComboSelect aria-label={label} defaultValue={value}>
        <option>{value}</option>
      </ComboSelect>
      <ComboArrow>
        <Triangle />
      </ComboArrow>
    </ComboFrame>
  );
}

function PanelTop({ title }) {
  return (
    <PanelHeader>
      <PanelTitle>{title}</PanelTitle>
      <PanelButton aria-label={`Pin ${title}`}><PinIcon /></PanelButton>
      <PanelButton aria-label={`Close ${title}`}><CrossIcon /></PanelButton>
    </PanelHeader>
  );
}

function TreeNode({ level = 0, icon, label, open, root, alert, dark, selected, children }) {
  return (
    <TreeRow $level={level} $alert={alert} $dark={dark}>
      <Twist $slim={root}>{open && <TwistIcon />}</Twist>
      <TreeIcon $slim={root}>
        {icon && (
          <svg width="16" height="16" viewBox="0 0 16 16" fill="none" stroke={G}>{treeIcons[icon]}</svg>
        )}
      </TreeIcon>
      <TreeLabel $selected={selected}>{label}</TreeLabel>
      {children}
    </TreeRow>
  );
}

function ToolGroup({ names, wide }) {
  return (
    <>
      {names.map(name => (
        <ToolButton key={name} aria-label={name}>
          <Icon name={name} />
        </ToolButton>
      ))}
      <Overflow $wide={wide} aria-label="More tools"><OverflowMark /></Overflow>
    </>
  );
}

const menus = [
  "File", "Edit", "View", "Insert", "Format", "Tools", "Draw", "Dimension", "Modify",
  "Window", "Information", "[NFRA-DESIGN(I)", "Help", "Advanced Tool",
];

const toolGroups = [
  ["frames", "dimInfo", "rebar", "slab", "beam", "bolt", "piles", "target", "mesh", "rebarDrop"],
  ["dimH", "dimD", "dimArc", "radius", "diameter", "angle", "boxDim", "pyramid", "dimHR", "dimDR", "dimArcR", "zigzag"],
  ["viewport", "viewportBulb", "rebarO", "slabO", "beamO", "boltO", "pilesO", "rebarBulb", "tagBulb"],
  ["tableR", "tableT", "tableS", "tableC", "tableL"],
  [
    "columns", "columnsX", "section", "sectionGear", "splitView", "leader", "leaderZig", "leaderDot",
    "leaderList", "dimList", "panelGear", "fitGear", "copyView", "panelTrash", "gears", "panelLock",
    "panelUnlock", "pdf", "deck", "note", "lamp", "tableLamp", "lampL",
  ],
];

const sketchTools = [
  "threeLines", "beamTeal", "leaderText", "pick", "layersTeal", "lineTeal",
  "lineSet", "rotate", "scale", "stretchH", "stretchD",
];

const properties = [
  {
    title: "General",
    rows: [
      ["Color", "ByLayer", "block"],
      ["Layer", "0"],
      ["Linetype", "ByLayer", "line"],
      ["Linetype scale", "1.000000"],
      ["Lineweight", "ByLayer", "line"],
      ["Transparency", "ByLayer"],
      ["Thickness", "0"],
    ],
  },
  {
    title: "View",
    dim: true,
    rows: [
      ["Center X", "14736.3621"],
      ["Center Y", "-7861.6596"],
      ["Center Z", "0.0000"],
      ["Height", "18413.9839"],
      ["Width", "30094.4960"],
    ],
  },
  { title: "Misc", rows: [["Viewport scale", "1:1"]] },
];

/* ---------- drawing ---------- */

const C = "#00eaea";
const Y = "#f0f000";

function Bearing({ x, y }) {
  return (
    <g transform={`translate(${x} ${y})`} fill="none">
      <path d="M-25 4L-5 9 26 4 6 0zM-23 6L-5 11 20 6M-5 7v4" stroke={C} />
      <path d="M-22 3L-4 5 24 3 5 0z" stroke="#00f000" strokeWidth="2" />
      <path d="M-18 0L0 2 19 0" stroke="#00f000" strokeWidth="2" />
      <path d="M-19-4L1-2 19-4 5-7z" stroke="#00f000" strokeWidth="2" />
      <path d="M-13-3L4-6 13-4M-16 1L2-2" stroke="#b8b8a8" strokeWidth="2" />
      <path d="M-24 4L-6 2 18 2M-12 1L12 0" stroke={Y} />
    </g>
  );
}

function Pile({ x, y, split }) {
  return (
    <g fill="none">
      <ellipse cx={x + 22} cy={y} rx="22" ry="3.500" stroke={Y} />
      <path d={`M${x} ${y}V${split}M${x + 5} ${y + 2}V${split + 1}M${x + 44} ${y}V${split + 4}`} stroke={Y} />
      <path d={`M${x} ${split}V820.500H${x + 44}V${split + 4}M${x + 5} ${split + 1}V820.500`} stroke={C} />
    </g>
  );
}

function Model() {
  return (
    <Scene viewBox="305 187 1310 800" preserveAspectRatio="xMidYMid slice">
      <defs>
        <pattern id="minor" x="370" y="261.500" width="10.910" height="10.910" patternUnits="userSpaceOnUse">
          <path d="M0 .5H11M.5 0V11" stroke="#161616" />
        </pattern>
        <pattern id="major" x="370" y="261.500" width="54.550" height="54.550" patternUnits="userSpaceOnUse">
          <path d="M0 .5H55M.5 0V55" stroke="#282828" />
        </pattern>
      </defs>
      <rect x="305" y="187" width="1310" height="800" fill="url(#minor)" />
      <rect x="305" y="187" width="1310" height="800" fill="url(#major)" />

      <path d="M315.500 207.500H1603.500V895.500H315.500z" fill="none" stroke="#4b7d92" />
      <rect x="1599" y="203" width="5" height="5" fill="#fff" />
      <rect x="366" y="201" width="4" height="4" fill="#7fe0a0" />
      <g fill="#5c9db5" fontFamily="Liberation Sans" fontWeight="700" fontSize="7">
        <text x="315" y="206">Style: By Name</text>
        <text x="1603" y="902" textAnchor="end">1 3D View (3D) 1:100</text>
      </g>

      <g shapeRendering="crispEdges">
        {/* pier cap */}
        <g fill="none" stroke={C}>
          <path d="M784.500 308.500L1090.500 362.500 1134.500 357 828.500 304zM1090.500 362.500V414M1134.500 357v52" />
          <path d="M784.500 360.500L909 399.500 964 409.500 1090.500 414.500 1134.500 409" />
        </g>
        <g fill="none" stroke={Y}>
          <path d="M828.500 304v19M828.500 336v19.500L845 360M828.500 355.500l-15 2M800 358.500l-15 2" />
          <path d="M858 364.500l27 8.500M897 377l27 8M937 389.500l15 5 25 4M988 401l20 3.500 15 .500M1037 405.500l28 1M1078 407.500l29 .500M1120 408.500l15 .500" />
          <path d="M909.500 399.500l16-2M938 396.500l14-2M1008 404.500l-14 2M981 407.500l-17 2" />
          <ellipse cx="959.500" cy="402" rx="26" ry="4" strokeDasharray="22 8" />
        </g>
      </g>
      <Bearing x={833.500} y={306} />
      <Bearing x={917.500} y={320.500} />
      <Bearing x={1000.500} y={335} />
      <Bearing x={1084.500} y={349.500} />

      <g shapeRendering="crispEdges">
        {/* column */}
        <g fill="none" stroke={C}>
          <path d="M933.500 404V661q4 4 26 4.500t26-4.500V403" />
          <path d="M939.500 406V663" opacity=".7" />
          <path d="M934.500 404V661" opacity=".4" />
          <path d="M985.500 402v9" stroke={Y} />
        </g>
        <path d="M934 660q6-2 18-2.500M967 657.500q14 0 18 3" fill="none" stroke={Y} />

        {/* pile cap */}
        <g fill="none" stroke={Y}>
          <path d="M933 644L974.500 639.500 986 641.500M974.500 639v32M974.500 684v33" />
          <path d="M974.500 717l-16 2M945 720l-28 4M904 725.500l-28 3.500M863 730.500l-28 3.500M821 735.500l-15 2M974.500 717l22 3.500M1009 722.500l28 5M1050 730l28 5M1091 737l23 4M974.500 719.500l-16 2M944 723.500l-28 3.500M903 728.500l-28 3.500M861 733l-27 3.500M820 738l-14 2M974.500 719l22 4M1010 725.500l28 5M1051 733l28 5M1092 740l22 4" />
        </g>
        <Pile x={845.500} y={734} split={748} />
        <Pile x={1029.500} y={737} split={753} />
        <Pile x={928.500} y={749} split={761} />
        <g fill="none">
          <ellipse cx="968.500" cy="722" rx="22" ry="3.500" stroke={Y} />
          <path d="M946.500 722v63M951.500 724v61M946.500 799v21M951.500 799v21M990.500 722v36" stroke={Y} />
          <path d="M990.500 758v62.500H928.500" stroke={C} />
        </g>
        <g fill="none" stroke={C}>
          <path d="M933 644L806 659.500 944.500 683.500 1113.500 663.500 986 641.500M806.500 659.500V737M944.500 683.500V765M1113.500 663.500V741" />
          <path d="M803.500 736.500v4L944.500 765 1115.500 744.500v-3.500L944.500 762z" />
          <path d="M806 736.500L944.500 761 1113 741" />
        </g>
      </g>

      {/* view axes */}
      <g fill="none" strokeWidth="1">
        <path d="M466.500 820.500V777M463 782l3.500-5 3.500 5" stroke="#1414f0" />
        <path d="M466.500 820.500L510 816M505 812.500l5 3.500-4 4" stroke="#f41010" />
        <path d="M466.500 820.500L423 813.500M428 810l-5 3.500 4 4.500" stroke="#10f010" />
      </g>
      <g fontFamily="Liberation Sans" fontWeight="700" fontSize="8" textAnchor="middle">
        <text x="466.500" y="775" fill="#1414f0">Z</text>
        <text x="514" y="818" fill="#f41010">X</text>
        <text x="419" y="815" fill="#10f010">Y</text>
      </g>

      {/* coordinate system marker */}
      <g fill="none" stroke="#fff">
        <path d="M330.500 946.500h15v15h-15zM337.500 954.500V886.500M337.500 954.500H405.500" />
        <path d="M337.500 864.500l-7 22h15zM405.500 946.500v15l22-7.500z" />
      </g>
      <g fontFamily="Roboto" fontWeight="300" fontSize="21" textAnchor="middle" fill="#fff">
        <text x="337.500" y="848">Y</text>
        <text x="450.500" y="961.500">X</text>
      </g>

      {/* crosshair */}
      <rect x="776.500" y="300.500" width="17" height="17" fill="none" stroke="#00b400" strokeWidth="2" />
      <path d="M784.500 258V360M735 307.500H835" stroke="#fff" />

      {/* step marker */}
      <rect x="711.500" y="248.500" width="134" height="93" fill="none" stroke="#fb4343" strokeWidth="3" />
      <circle cx="853" cy="340" r="20" fill="#f98a64" />
      <text x="853" y="350.500" fontFamily="Liberation Sans" fontSize="29" textAnchor="middle" fill="#fff">7</text>
    </Scene>
  );
}

const navPaths = ["M3 2v9M11 2L5 6.500 11 11z", "M10 2L4 6.500 10 11z", "M4 2l6 4.500L4 11z", "M3 2l6 4.500L3 11zM11 2v9"];

export default function App() {
  const [command, setCommand] = useState("Specify first extension line origin :");

  return (
    <Page>
      <GlobalStyle />
      <Header>
        <LogoSlot><Logo /></LogoSlot>
        <HeaderRows>
          <TitleRow>
            {quickIcons.map(([label, shape]) => (
              <QuickButton key={label} aria-label={label}>
                <svg width="17" height="17" viewBox="0 0 17 17">{shape}</svg>
              </QuickButton>
            ))}
            <QuickButton $narrow aria-label="Customize"><OverflowMark /></QuickButton>
            <Title>
              <Product>[CONNECTED] MIDAS CAD INFRA-DESIGN</Product> - Africa webinar- RC T beam-Updated Rebar modelling-R1.cimz
            </Title>
            <WindowButtons>
              <WindowButton aria-label="Minimize">
                <svg width="12" height="14" viewBox="0 0 12 14" fill="#eee"><path d="M0 8h12v4H0z" /></svg>
              </WindowButton>
              <WindowButton aria-label="Restore">
                <svg width="17" height="14" viewBox="0 0 17 14" fill="none" stroke="#eee" strokeWidth="2"><path d="M1 5h9v8H1zM6 4V1h10v7h-5" /></svg>
              </WindowButton>
              <WindowButton aria-label="Close">
                <svg width="14" height="12" viewBox="0 0 14 12" fill="none" stroke="#f2f2f2" strokeWidth="3"><path d="M2 1l10 10M12 1L2 11" /></svg>
              </WindowButton>
            </WindowButtons>
          </TitleRow>
          <MenuBar>
            {menus.map(name => (
              <MenuItem key={name} $tight={name.startsWith("[")}>{name}</MenuItem>
            ))}
          </MenuBar>
        </HeaderRows>
      </Header>

      <Toolbar $height={33}>
        <Gripper />
        <WideIcon $width={32}>
          <svg width="24" height="24" viewBox="0 0 24 24" fill="#d8d8d8">
            <path d="M8 2h16l-6 8H1zM3 13h16l5-6v3l-6 7H1zM3 18h16l5-6v3l-6 7H1z" />
          </svg>
        </WideIcon>
        <Separator />
        <Combo label="Layer" value="0" width={300}>
          <LayerState>
            <svg width="13" height="16" viewBox="0 0 13 16" fill="#eee"><path d="M6.500 1a4 4 0 0 1 2 7.500L8 11H5L4.500 8.500A4 4 0 0 1 6.500 1zM5 12h3v2H5z" /></svg>
            <svg width="15" height="16" viewBox="0 0 15 16" fill="#ddd" stroke="#ddd"><circle cx="7.500" cy="8" r="2.500" /><path d="M7.500 1v3M7.500 12v3M1 8h3M11 8h3M3 3.500l2 2M10 10.500l2 2M12 3.500l-2 2M5 10.500l-2 2" /></svg>
            <svg width="14" height="16" viewBox="0 0 14 16" fill="none" stroke="#a8a8a8"><path d="M6 2v11M1 7.500h10M2.500 4l7 7M9.500 4l-7 7M4 3l2 2 2-2M4 12l2-2 2 2M10 2.500h3V14H7" /></svg>
            <svg width="15" height="16" viewBox="0 0 15 16" fill="none" stroke="#ddd"><path d="M1 8h9v6H1z" fill="#ddd" /><path d="M8 8V5a3 3 0 0 1 6 0v3" strokeWidth="1.500" /></svg>
            <ColorBlock $width={12} $height={13} />
          </LayerState>
        </Combo>
        <Separator />
        <Combo label="Color" value="ByLayer" width={200}>
          <BlockSlot><ColorBlock $width={50} $height={18} /></BlockSlot>
        </Combo>
        <Separator />
        <Combo label="Linetype" value="ByLayer" width={219}>
          <LineSample $width={76} />
        </Combo>
        <Separator />
        <Combo label="Lineweight" value="ByLayer" width={200}>
          <LineSample $width={60} />
        </Combo>
        <Separator />
        <Gripper $before={4} $after={3} />
        <WideIcon $width={31}>
          <svg width="24" height="24" viewBox="0 0 24 24" fill="#a5a5a5">
            <path d="M1 2h17v6h-2l-1-3h-3v13h2v2H5v-2h2V5H4L3 8H1zM14 16h9l-4 4z" />
          </svg>
        </WideIcon>
        <Combo label="Text style" value="Standard" width={125} />
        <Separator />
        <Combo label="Text height" value="2.5" width={88} />
        <WideIcon $width={40}>
          <svg width="22" height="24" viewBox="0 0 22 24" fill="none" stroke="#8b8b8b" strokeWidth="1.500">
            <path d="M1 6h20M4 3L1 6l3 3M18 3l3 3-3 3" /><path d="M13 16h9l-4 5z" fill="#8b8b8b" stroke="none" />
          </svg>
        </WideIcon>
        <Combo label="Dimension style" value="InfraDesign_S..." width={125} />
        <Separator />
        <WideIcon $width={30}>
          <svg width="24" height="24" viewBox="0 0 24 24" fill="none" stroke="#8b8b8b" strokeWidth="1.500">
            <path d="M2 20L8 6l6 13M0 16l2 5 4-3" /><path d="M14 1h9v9h-9z" fill="#8b8b8b" stroke="none" />
            <path d="M16 4h5M18.500 4v5" stroke="#272828" /><path d="M15 16h9l-4 5z" fill="#8b8b8b" stroke="none" />
          </svg>
        </WideIcon>
        <Combo label="Leader style" value="Standard" width={125} />
      </Toolbar>

      <Toolbar $fill>
        {toolGroups.map((names, index) => [
          <Gripper key={`grip-${index}`} $after={index === 0 ? 3 : 2} />,
          <ToolGroup key={names[0]} names={names} wide={index === 0} />,
        ])}
      </Toolbar>

      <Toolbar>
        <Gripper $after={3} />
        {sketchTools.map(name => (
          <ToolButton key={name} aria-label={name}><Icon name={name} /></ToolButton>
        ))}
      </Toolbar>

      <Body>
        <Side>
          <Panel>
            <PanelTop title="CIM View" />
            <FilterRow>
              <Filter>
                <FilterSelect aria-label="Filter" defaultValue="All"><option>All</option></FilterSelect>
                <Triangle color="#c8c8c8" />
              </Filter>
            </FilterRow>
            <ColumnHeads>
              <ColumnHead $width={229}>Item</ColumnHead>
              <ColumnHead>Status</ColumnHead>
              <ColumnTail $width={14} />
            </ColumnHeads>
            <Tree>
              <TreeNode root alert label="CIM mode" />
              <TreeNode open icon="drawing" label="Auto Generated Drawing" />
              <TreeNode open level={1} icon="base" label="Base" />
              <TreeNode open dark level={2} icon="dwg" label="Current Mode" />
              <TreeNode dark selected level={3} icon="view3d" label="3D View (3D)" />
            </Tree>
          </Panel>
          <Panel>
            <PanelTop title="Object" />
            <ColumnHeads $tall>
              <ColumnHead>Item</ColumnHead>
              <ColumnTail $width={6} />
            </ColumnHeads>
            <Tree>
              <TreeNode root icon="group" label="Grouping" />
            </Tree>
          </Panel>
        </Side>

        <Center>
          <DocTabs>
            <DocTab>
              Base
              <CrossIcon size={13} color="#d0d0d0" />
            </DocTab>
            <AddTab aria-label="New tab">
              <svg width="12" height="12" viewBox="0 0 12 12" stroke="#c8c8c8" strokeWidth="2"><path d="M6 0v12M0 6h12" /></svg>
            </AddTab>
            <TabListButton aria-label="Tab list"><Triangle color="#f4f4f4" /></TabListButton>
          </DocTabs>
          <Viewport>
            <Model />
            <Crumb>CIM Mode &gt; BASE &gt; Base</Crumb>
            <Console>
              <LogLine><span>{"Command:   "}</span></LogLine>
              <LogLine><span>{"Command:   _LINEAR2.5DDIMENSION"}</span></LogLine>
              <LogLine><span>{"Specify the distance criteria for display [Distance(D)/Delta-X(X)/Delta-Y(Y)/Delta-Z(Z)] <D> :D"}</span></LogLine>
              <CommandBar>
                <CommandHandle aria-label="Command options">
                  <svg width="3" height="14" viewBox="0 0 3 14" stroke="#bbb"><path d="M.5 0v14M2.500 0v14" strokeDasharray="1 1" /></svg>
                  <svg width="10" height="11" viewBox="0 0 10 11" fill="#f0f0f0"><path d="M0 0h10v2H0zM0 4h10v2H0zM0 8h10v2H0z" /></svg>
                </CommandHandle>
                <CommandIcon>
                  <svg width="16" height="16" viewBox="0 0 16 16"><rect width="16" height="16" rx="2" fill="#d0d0d0" /><path d="M3 4l4 4-4 4M8 12h5" fill="none" stroke="#222" strokeWidth="1.500" /></svg>
                </CommandIcon>
                <CommandInput aria-label="Command" value={command} onChange={event => setCommand(event.target.value)} />
              </CommandBar>
            </Console>
            <Readout>10753.6570,-2324.8868,0.0000</Readout>
            <TileButton aria-label="Viewports">
              <svg width="18" height="18" viewBox="0 0 18 18" fill="#f0f0f0">
                <rect width="8" height="8" rx="1" /><rect x="10" width="8" height="8" rx="1" />
                <rect y="10" width="8" height="8" rx="1" /><rect x="10" y="10" width="8" height="8" rx="1" />
              </svg>
            </TileButton>
          </Viewport>
          <LayoutTabs>
            {navPaths.map(d => (
              <NavButton key={d} aria-label="Scroll layouts">
                <svg width="14" height="13" viewBox="0 0 14 13" fill="#e8e8e8" stroke="#e8e8e8"><path d={d} /></svg>
              </NavButton>
            ))}
            <LayoutTab $active>Model</LayoutTab>
            <LayoutTab>Layout1</LayoutTab>
            <TabSplitter />
          </LayoutTabs>
        </Center>

        <Side $right>
          <Panel $grow={49}>
            <PanelTop title="CAD View" />
            <ColumnHeads $tall>
              <ColumnHead>Item</ColumnHead>
              <ColumnTail $width={6} />
            </ColumnHeads>
            <Tree>
              <TreeNode root alert icon="sheet" label="CIM mode" />
              <TreeNode open icon="drawing" label="CAD">
                <Chips>
                  <Chip aria-label="Layout panel">
                    <svg width="13" height="12" viewBox="0 0 13 12" fill="none" stroke="#222"><path d="M1.500 1.500h10v9h-10z" /><path d="M9 2h2v2H9zM9 5h2v2H9zM9 8h2v2H9z" fill="#222" stroke="none" /></svg>
                  </Chip>
                  <Chip aria-label="Window panel">
                    <svg width="13" height="12" viewBox="0 0 13 12"><path d="M0 0h13v12H0z" fill="#222" /><path d="M1 1h11v2H1zM1 4h11v7H1z" fill="#1383e6" /></svg>
                  </Chip>
                </Chips>
              </TreeNode>
              <TreeNode level={1} icon="folder" label="cDrawing1" />
            </Tree>
          </Panel>
          <Panel $grow={51}>
            <PanelTop title="Properties" />
            <FilterRow>
              <Filter>
                <FilterSelect aria-label="Selection" defaultValue="No selected item."><option>No selected item.</option></FilterSelect>
                <Triangle color="#c8c8c8" />
              </Filter>
              <PickButtons>
                <PickButton aria-label="Select all">
                  <svg width="16" height="16" viewBox="0 0 16 16" fill="none" stroke="#ddd"><path d="M.5.5h15v15H.5z" strokeDasharray="1 1" /><path d="M3 3h4v4H3z" fill="#eee" /><path d="M9.500 3h4v4h-4zM3 9.500h4v4H3zM9.500 9.500h4v4h-4z" /></svg>
                </PickButton>
                <PickButton aria-label="Add to selection">
                  <svg width="16" height="16" viewBox="0 0 16 16" fill="none" stroke="#ddd"><path d="M.5.5h15v15H.5zM3 3h10v10H3z" strokeDasharray="1 1" /><path d="M8 4.500v7M4.500 8h7" strokeWidth="2" /></svg>
                </PickButton>
                <PickButton aria-label="Pick">
                  <svg width="16" height="16" viewBox="0 0 16 16" fill="none" stroke="#ddd"><path d="M.5.5h15v15H.5z" strokeDasharray="1 1" /><path d="M6 3l6 6H9l2 4-2 1-1-4-2 2z" fill="#ddd" stroke="none" /></svg>
                </PickButton>
                <PickButton aria-label="Quick select">
                  <svg width="16" height="16" viewBox="0 0 16 16" fill="#eee"><path d="M8 1h6l-3 4h4L8 13l1-5H6zM3 4l6 7H6l-3 4z" /></svg>
                </PickButton>
              </PickButtons>
            </FilterRow>
            <PropertyArea>
              <PropertyScroll>
                <PropertyTable>
                  <colgroup>
                    <col width="26" />
                    <col width="126" />
                    <col />
                  </colgroup>
                  {properties.map(section => (
                    <tbody key={section.title}>
                      <tr>
                        <TwistCell><Twist><TwistIcon /></Twist></TwistCell>
                        <SectionName colSpan={2} scope="rowgroup">{section.title}</SectionName>
                      </tr>
                      {section.rows.map(([name, value, sample]) => (
                        <tr key={name}>
                          <TwistCell />
                          <NameCell scope="row" $dim={section.dim}>{name}</NameCell>
                          <ValueCell $dim={section.dim}>
                            <ValueLine $sample={sample}>
                              {sample && <Swatch $line={sample === "line"} />}
                              {value}
                            </ValueLine>
                          </ValueCell>
                        </tr>
                      ))}
                    </tbody>
                  ))}
                </PropertyTable>
              </PropertyScroll>
              <Scrollbar>
                <svg width="11" height="6" viewBox="0 0 11 6"><path d="M0 6h11L5.500 0z" /></svg>
                <svg width="11" height="6" viewBox="0 0 11 6"><path d="M0 0h11L5.500 6z" /></svg>
              </Scrollbar>
            </PropertyArea>
          </Panel>
        </Side>
      </Body>
      <StatusStrip />
    </Page>
  );
}
